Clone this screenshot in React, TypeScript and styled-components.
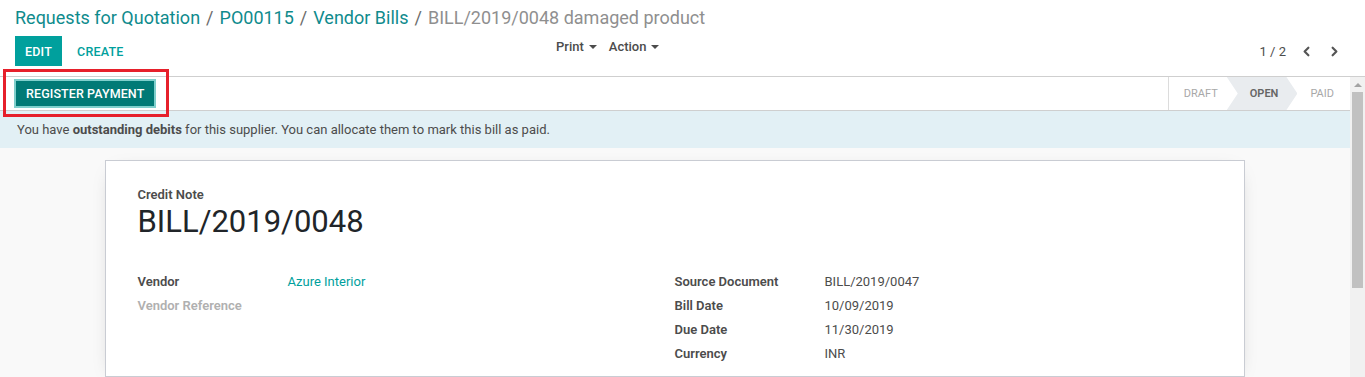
import React from "react";
import styled, { createGlobalStyle } from "styled-components";
import { ChevronLeft, ChevronRight } from "lucide-react";

const GlobalStyle = createGlobalStyle`
  html, body { margin: 0; padding: 0; background: #fff; overflow: hidden; }
  body { font-family: Roboto, "Noto Sans", sans-serif; font-size: 13px; color: #4c4c4c; }
  * { box-sizing: border-box; }
`;

const Page = styled.div`
  width: 1365px;
  height: 377px;
  display: flex;
  flex-direction: column;
  position: relative;
  overflow: hidden;
`;

const ControlPanel = styled.div`
  padding: 6px 15px 0 15px;
  border-bottom: 1px solid #cfcfcf;
  height: 77px;
`;

const Breadcrumb = styled.div`
  font-size: 18px;
  line-height: 24px;
  display: flex;
  gap: 6px;
  color: #8f8f8f;
`;

const Crumb = styled.span<{ $active?: boolean }>`
  color: ${(p) => (p.$active ? "#8f8f8f" : "#0f8b8d")};
`;

const Sep = styled.span`
  color: #6b6b6b;
`;

const ButtonRow = styled.div`
  display: grid;
  grid-template-columns: 541px auto 1fr;
  align-items: start;
  margin-top: 6px;
`;

const Buttons = styled.div`
  display: flex;
  align-items: center;
`;

const PrimaryBtn = styled.div`
  background: #00a09d;
  color: #fff;
  font-size: 12.5px;
  font-weight: 500;
  height: 30px;
  padding: 0 10px;
  display: flex;
  align-items: center;
  letter-spacing: 0.2px;
`;

const LinkBtn = styled.div`
  color: #00a09d;
  font-size: 12.5px;
  font-weight: 500;
  height: 30px;
  padding: 0 15px;
  display: flex;
  align-items: center;
  letter-spacing: 0.2px;
`;

const Menus = styled.div`
  display: flex;
  gap: 12px;
  padding-top: 3px;
`;

const Menu = styled.div`
  color: #4c4c4c;
  font-size: 13px;
  font-weight: 500;
  display: flex;
  align-items: center;
  gap: 5px;
  &::after {
    content: "";
    border-left: 4px solid transparent;
    border-right: 4px solid transparent;
    border-top: 4px solid #4c4c4c;
  }
`;

const Pager = styled.div`
  justify-self: end;
  display: flex;
  align-items: center;
  gap: 13px;
  padding-top: 8px;
  margin-right: 8px;
  color: #4c4c4c;
  font-size: 13px;
`;

const PagerValue = styled.span`
  margin-right: 0;
`;

const Body = styled.div`
  flex: 1;
  display: flex;
  min-height: 0;
`;

const Main = styled.div`
  flex: 1;
  display: flex;
  flex-direction: column;
  background: #f9f9f9;
`;

const Header = styled.div`
  height: 34px;
  background: #fff;
  border-bottom: 1px solid #cfcfcf;
  display: flex;
  justify-content: space-between;
  align-items: center;
  padding-left: 14px;
`;

const ActionBtn = styled.div`
  background: #017a76;
  color: #fff;
  font-size: 12.5px;
  font-weight: 500;
  height: 25px;
  padding: 0 10px;
  display: flex;
  align-items: center;
  box-shadow: 0 0 0 2px #7fcfcc;
  margin-left: 2px;
  letter-spacing: 0.1px;
`;

const StatusBar = styled.div`
  display: flex;
  height: 100%;
  border-left: 1px solid #dcdcdc;
`;

const Status = styled.div<{ $active?: boolean; $pad: string }>`
  display: flex;
  align-items: center;
  font-size: 11px;
  font-weight: ${(p) => (p.$active ? 600 : 400)};
  color: ${(p) => (p.$active ? "#666" : "#a8a8a8")};
  background: ${(p) => (p.$active ? "#e9ecef" : "transparent")};
  padding: ${(p) => p.$pad};
  clip-path: ${(p) =>
    p.$active
      ? "polygon(0 0, calc(100% - 11px) 0, 100% 50%, calc(100% - 11px) 100%, 0 100%, 11px 50%)"
      : "none"};
`;

const Alert = styled.div`
  height: 37px;
  background: #e2f0f5;
  color: #4c4c4c;
  display: flex;
  align-items: center;
  padding-left: 17px;
  font-size: 13px;
  b { font-weight: 700; }
`;

const SheetBg = styled.div`
  flex: 1;
  padding-top: 12px;
  display: flex;
  justify-content: center;
`;

const Sheet = styled.div`
  width: 1140px;
  background: #fff;
  border: 1px solid #c9ccd3;
  box-shadow: 0 5px 20px -12px rgba(0, 0, 0, 0.4);
  padding: 26px 32px 0 32px;
  margin-left: -1px;
`;

const Small = styled.div`
  font-size: 13px;
  font-weight: 600;
  color: #4c4c4c;
  line-height: 16px;
`;

const Title = styled.h1`
  margin: 2px 0 0 0;
  font-size: 31px;
  font-weight: 400;
  color: #212529;
  line-height: 34px;
`;

const Groups = styled.div`
  display: grid;
  grid-template-columns: 1fr 1fr;
  margin-top: 30px;
`;

const Group = styled.div`
  display: flex;
  flex-direction: column;
`;

const Row = styled.div`
  display: flex;
  height: 24px;
  align-items: center;
`;

const Label = styled.div<{ $muted?: boolean }>`
  width: 150px;
  font-weight: 600;
  color: ${(p) => (p.$muted ? "#b0b0b0" : "#4c4c4c")};
`;

const Value = styled.div<{ $link?: boolean }>`
  color: ${(p) => (p.$link ? "#00a09d" : "#4c4c4c")};
`;

const Scrollbar = styled.div`
  width: 15px;
  background: #f1f1f1;
  display: flex;
  flex-direction: column;
  align-items: center;
  padding-top: 6px;
`;

const ScrollArrow = styled.div`
  border-left: 4px solid transparent;
  border-right: 4px solid transparent;
  border-bottom: 4px solid #a3a3a3;
`;

const Thumb = styled.div`
  width: 11px;
  height: 196px;
  background: #c1c1c1;
  margin-top: 5px;
`;

const Highlight = styled.div`
  position: absolute;
  left: 3px;
  top: 69px;
  width: 166px;
  height: 48px;
  border: 3px solid #e6202b;
  pointer-events: none;
`;

export default function App() {
  return (
    <Page>
      <GlobalStyle />
      <ControlPanel>
        <Breadcrumb>
          <Crumb>Requests for Quotation</Crumb>
          <Sep>/</Sep>
          <Crumb>PO00115</Crumb>
          <Sep>/</Sep>
          <Crumb>Vendor Bills</Crumb>
          <Sep>/</Sep>
          <Crumb $active>BILL/2019/0048 damaged product</Crumb>
        </Breadcrumb>
        <ButtonRow>
          <Buttons>
            <PrimaryBtn>EDIT</PrimaryBtn>
            <LinkBtn>CREATE</LinkBtn>
          </Buttons>
          <Menus>
            <Menu>Print</Menu>
            <Menu>Action</Menu>
          </Menus>
          <Pager>
            <PagerValue>1 / 2</PagerValue>
            <ChevronLeft size={15} strokeWidth={3.5} color="#555" />
            <ChevronRight size={15} strokeWidth={3.5} color="#555" />
          </Pager>
        </ButtonRow>
      </ControlPanel>
      <Body>
        <Main>
          <Header>
            <ActionBtn>REGISTER PAYMENT</ActionBtn>
            <StatusBar>
              <Status $pad="0 9px 0 15px">DRAFT</Status>
              <Status $active $pad="0 19px 0 23px">OPEN</Status>
              <Status $pad="0 16px 0 13px">PAID</Status>
            </StatusBar>
          </Header>
          <Alert>
            <span>
              You have <b>outstanding debits</b> for this supplier. You can allocate them to mark this bill as paid.
            </span>
          </Alert>
          <SheetBg>
            <Sheet>
              <Small>Credit Note</Small>
              <Title>BILL/2019/0048</Title>
              <Groups>
                <Group>
                  <Row>
                    <Label>Vendor</Label>
                    <Value $link>Azure Interior</Value>
                  </Row>
                  <Row>
                    <Label $muted>Vendor Reference</Label>
                  </Row>
                </Group>
                <Group>
                  <Row>
                    <Label>Source Document</Label>
                    <Value>BILL/2019/0047</Value>
                  </Row>
                  <Row>
                    <Label>Bill Date</Label>
                    <Value>10/09/2019</Value>
                  </Row>
                  <Row>
                    <Label>Due Date</Label>
                    <Value>11/30/2019</Value>
                  </Row>
                  <Row>
                    <Label>Currency</Label>
                    <Value>INR</Value>
                  </Row>
                </Group>
              </Groups>
            </Sheet>
          </SheetBg>
        </Main>
        <Scrollbar>
          <ScrollArrow />
          <Thumb />
        </Scrollbar>
      </Body>
      <Highlight />
    </Page>
  );
}
